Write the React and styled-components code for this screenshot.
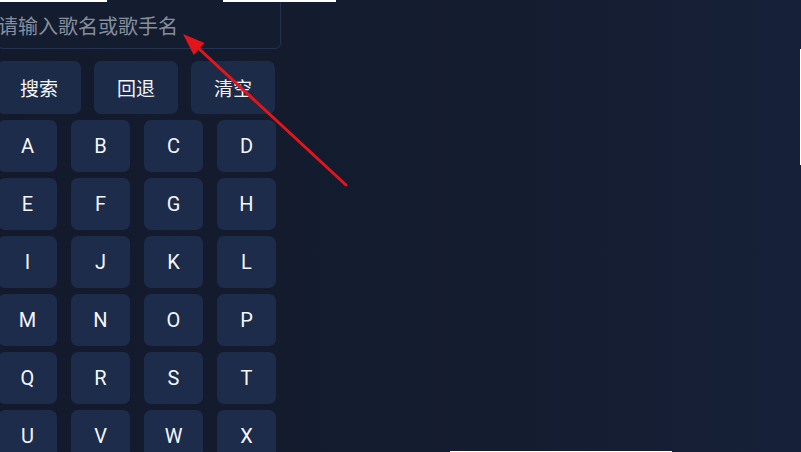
import React from "react";
import styled, { createGlobalStyle } from "styled-components";

const GlobalStyle = createGlobalStyle`
  html, body {
    margin: 0;
    padding: 0;
    background: #131a2c;
  }
  * { box-sizing: border-box; }
`;

const Page = styled.div`
  position: relative;
  width: 801px;
  height: 452px;
  overflow: hidden;
  background: linear-gradient(90deg, #131a2c 0%, #141c2f 60%, #162038 100%);
  font-family: Roboto, "Noto Sans CJK SC", sans-serif;
`;

const Panel = styled.div`
  width: 284px;
  margin-left: -3px;
  margin-top: -2px;
  display: flex;
  flex-direction: column;
`;

const SearchBox = styled.div`
  height: 51px;
  border: 1px solid #24324d;
  border-radius: 6px;
  background: #141c2f;
  display: flex;
  align-items: center;
  padding-top: 4px;
  font-family: "Noto Sans CJK SC", sans-serif;
  font-size: 20px;
  color: #868e9d;
  white-space: nowrap;
`;

const ActionRow = styled.div`
  margin-top: 12px;
  display: grid;
  grid-template-columns: repeat(3, 84px);
  column-gap: 13px;
`;

const ActionButton = styled.button`
  height: 53px;
  border: none;
  border-radius: 7px;
  background: #1c2b48;
  color: #f2f4f8;
  font-family: "Noto Sans CJK SC", sans-serif;
  font-size: 19px;
  padding: 0;
  cursor: pointer;
`;

const KeyGrid = styled.div`
  margin-top: 6px;
  padding-left: 1px;
  display: grid;
  grid-template-columns: repeat(4, 59px);
  column-gap: 14px;
  row-gap: 6px;
`;

const Key = styled.button`
  height: 52px;
  border: none;
  border-radius: 7px;
  background: #1c2c4a;
  color: #f4f6fa;
  font-family: Roboto, sans-serif;
  font-size: 20px;
  padding: 0;
  cursor: pointer;
`;

const Overlay = styled.svg`
  position: absolute;
  left: 0;
  top: 0;
  pointer-events: none;
`;

const Edge = styled.div`
  position: absolute;
  background: #ffffff;
`;

const letters = "ABCDEFGHIJKLMNOPQRSTUVWX".split("");

export default function App() {
  return (
    <Page>
      <GlobalStyle />
      <Panel>
        <SearchBox>请输入歌名或歌手名</SearchBox>
        <ActionRow>
          <ActionButton>搜索</ActionButton>
          <ActionButton>回退</ActionButton>
          <ActionButton>清空</ActionButton>
        </ActionRow>
        <KeyGrid>
          {letters.map(l => (
            <Key key={l}>{l}</Key>
          ))}
        </KeyGrid>
      </Panel>

      <Overlay width="801" height="452" viewBox="0 0 801 452">
        <line x1="346" y1="185" x2="196" y2="46" stroke="#e3151b" strokeWidth="3" strokeLinecap="round" />
        <polygon points="183,34 193.7,54.9 204.5,43.1" fill="#e3151b" />
      </Overlay>

      <Edge style={{ left: 0, top: 0, width: 107, height: 2 }} />
      <Edge style={{ left: 223, top: 0, width: 113, height: 2 }} />
      <Edge style={{ left: 800, top: 49, width: 1, height: 116 }} />
      <Edge style={{ left: 450, top: 451, width: 222, height: 1 }} />
    </Page>
  );
}
